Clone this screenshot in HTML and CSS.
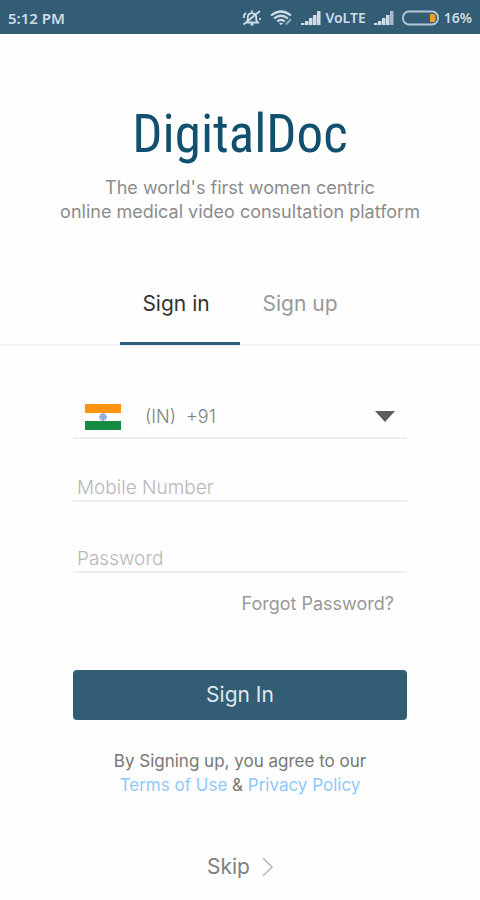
FILE: index.html
```html
<!DOCTYPE html>
<html lang="en">
<head>
<meta charset="utf-8">
<meta name="viewport" content="width=device-width, initial-scale=1">
<title>DigitalDoc</title>
<link rel="stylesheet" href="styles.css">
</head>
<body>
<div class="status">
  <span class="clock">5:12 PM</span>
  <div class="indicators">
    <svg width="20" height="18" viewBox="0 0 20 18" fill="none" stroke="currentColor" stroke-width="1.800" aria-hidden="true"><path d="M4 13.500h12l-1.800-2.500V7.500A4.300 4.300 0 0 0 5.800 7.500V11zM8.500 15.500h3M10 3V1.500M1.500 15.500L18 2M2 9V6l2-2M18 9v2"/></svg>
    <svg class="wifi" width="23" height="18" viewBox="0 0 23 18" fill="none" stroke="currentColor" stroke-width="2.200" aria-hidden="true"><path d="M1 6.500Q11 -1.500 21 6.500M4 9.500Q11 4 18 9.500M7.200 12.300Q11 9.300 14.800 12.300"/><path d="M8.800 13.700h4.400L11 16.200z" fill="currentColor" stroke="none"/><path d="M16 15.500l5-5.500" stroke-width="2" opacity=".6"/></svg>
    <svg width="20" height="16" viewBox="0 0 20 16" fill="currentColor" aria-hidden="true"><path d="M0 13h3.500v2H0zM4 11h3.500v4H4zM8 8h3.500v7H8zM12 5h3.500v10H12zM16 1h3.500v14H16z"/></svg>
    <span class="network">VoLTE</span>
    <svg width="20" height="16" viewBox="0 0 20 16" fill="currentColor" aria-hidden="true"><path d="M0 13h3.500v2H0zM4 11h3.500v4H4zM8 8h3.500v7H8zM12 5h3.500v10H12z"/><path d="M16 1h3.500v14H16z" opacity=".75"/></svg>
    <svg class="battery" width="37" height="16" viewBox="0 0 37 16" aria-hidden="true"><rect x="1" y="1.500" width="35" height="13" rx="6" fill="none" stroke="currentColor" stroke-width="1.800" opacity=".85"/><path d="M28 4h3q2.500 0 2.500 2.500v3Q33.500 12 31 12h-3z" fill="#f5a020"/></svg>
    <span>16%</span>
  </div>
</div>
<header class="brand">
  <h1>DigitalDoc</h1>
  <p>The world's first women centric<br>online medical video consultation platform</p>
</header>
<nav class="tabs">
  <a class="tab active" href="#signin">Sign in</a>
  <a class="tab" href="#signup">Sign up</a>
</nav>
<main>
  <form id="signin">
    <div class="field country">
      <svg class="flag" width="36" height="26" viewBox="0 0 36 26" aria-hidden="true"><path d="M0 0h36v26H0z" fill="#fff"/><path d="M0 0h36v9H0z" fill="#ff9410"/><path d="M0 17h36v9H0z" fill="#168b42"/><circle cx="18" cy="13" r="3.200" fill="#b9cdf0" stroke="#7e9bd4"/><path d="M18 9.500v7M14.500 13h7" stroke="#6f8fce" stroke-width=".8"/></svg>
      <select aria-label="Country code"><option>(IN)&nbsp; +91</option></select>
      <svg class="arrow" width="20" height="11" viewBox="0 0 20 11" fill="#5e5e5e" aria-hidden="true"><path d="M0 0h20L10 11z"/></svg>
    </div>
    <input class="field" type="tel" placeholder="Mobile Number" aria-label="Mobile Number">
    <input class="field" type="password" placeholder="Password" aria-label="Password">
    <a class="forgot" href="#forgot">Forgot Password?</a>
    <button class="submit" type="submit">Sign In</button>
  </form>
  <p class="terms">By Signing up, you agree to our<br><a href="#terms">Terms of Use</a> &amp; <a href="#privacy">Privacy Policy</a></p>
  <a class="skip" href="#skip">Skip
    <svg width="11" height="20" viewBox="0 0 11 20" fill="none" stroke="#b5b5b5" stroke-width="1.500" aria-hidden="true"><path d="M1 1l9 9-9 9"/></svg>
  </a>
</main>
</body>
</html>
```
FILE: styles.css
```css
* {
  box-sizing: border-box;
}

body {
  margin: 0;
  background: #fefefe;
  color: #808080;
  font-family: Inter, "Liberation Sans", sans-serif;
  font-size: 18px;
  line-height: 24px;
}

a {
  color: inherit;
  text-decoration: none;
}

.status {
  display: flex;
  justify-content: space-between;
  align-items: center;
  height: 34px;
  padding: 2px 8px 0;
  background: #335d75;
  color: #cddce6;
  font: 600 14px/20px "Noto Sans", sans-serif;
}

.clock {
  font-size: 15px;
}

.indicators {
  display: flex;
  align-items: center;
}

.wifi {
  margin: 0 8px;
}

.network {
  margin: 0 8px 0 4px;
}

.battery {
  margin: 0 5px 0 8px;
}

.brand {
  padding: 68px 16px 0;
  text-align: center;
}

h1 {
  margin: 0;
  color: #12506f;
  font: 400 53px/64px "Roboto Condensed", "Liberation Sans Narrow", Roboto, sans-serif;
}

.brand p {
  margin: 10px 0 0;
  color: #8c8c8c;
}

.tabs {
  display: flex;
  justify-content: center;
  margin-top: 44px;
  border-bottom: 2px solid #f2f2f2;
}

.tab {
  width: 120px;
  padding: 24px 4px 26px;
  margin-bottom: -1px;
  border-bottom: 3px solid transparent;
  color: #999;
  font-size: 21px;
  text-align: center;
}

.tab.active {
  padding-right: 12px;
  border-color: #2d5d7c;
  color: #333;
}

main {
  padding: 0 73px;
}

form {
  display: flex;
  flex-direction: column;
  padding-top: 48px;
}

.field {
  width: 100%;
  border: 0;
  border-bottom: 2px solid #ededed;
  padding: 0 4px;
  background: none;
  color: #666;
  font: 300 19px/24px Inter, sans-serif;
}

.country {
  display: flex;
  align-items: center;
  height: 45px;
  padding: 2px 12px 0;
  font-size: 18px;
}

select {
  flex: 1;
  appearance: none;
  margin-left: 20px;
  padding: 0 4px;
  border: 0;
  background: none;
  color: #808080;
  font: inherit;
}

input.field {
  height: 28px;
  margin-top: 35px;
}

input.field + input.field {
  margin-top: 43px;
}

input::placeholder {
  color: #b8b8b8;
  opacity: 1;
}

.forgot {
  align-self: flex-end;
  margin: 19px 13px 0 0;
  color: #999;
}

.submit {
  height: 50px;
  margin-top: 54px;
  border: 0;
  border-radius: 4px;
  background: #335d75;
  color: #dfe7ee;
  font: 400 21px/24px Inter, sans-serif;
}

.terms {
  margin: 29px 0 0;
  text-align: center;
  color: #777;
  font-size: 17px;
}

.terms a {
  color: #8fc8fa;
}

.skip {
  display: flex;
  justify-content: center;
  align-items: center;
  gap: 12px;
  margin-top: 58px;
  font-size: 21px;
}
```
